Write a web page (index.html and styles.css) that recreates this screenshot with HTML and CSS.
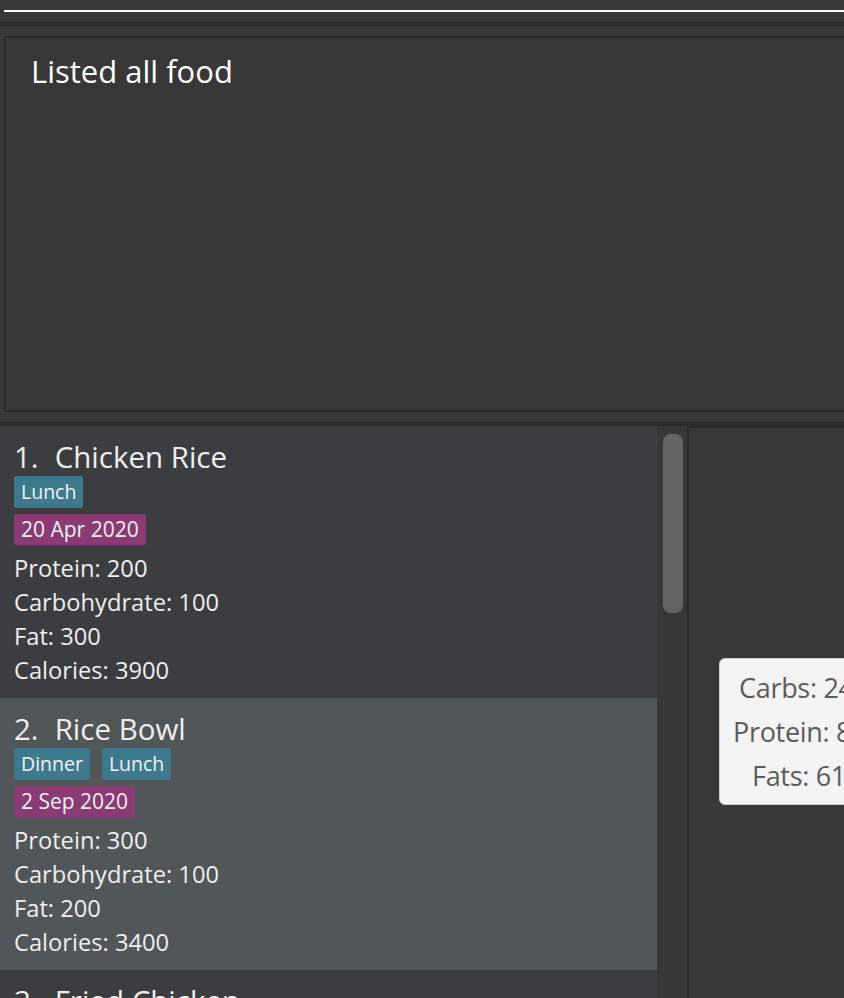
FILE: index.html
```html
<!DOCTYPE html>
<html>
<head>
<meta charset="utf-8">
<link rel="stylesheet" href="styles.css">
</head>
<body>
<div class="app">
  <div class="command"><div class="command-line"></div></div>
  <div class="sep"></div>
  <div class="result-wrap">
    <div class="result">Listed all food</div>
  </div>
  <div class="sep"></div>
  <div class="main">
    <div class="list">
      <div class="card">
        <div class="title"><span class="idx">1.</span>Chicken Rice</div>
        <div class="tags"><span class="tag">Lunch</span></div>
        <div class="tags"><span class="date">20 Apr 2020</span></div>
        <div class="line">Protein: 200</div>
        <div class="line">Carbohydrate: 100</div>
        <div class="line">Fat: 300</div>
        <div class="line">Calories: 3900</div>
      </div>
      <div class="card selected">
        <div class="title"><span class="idx">2.</span>Rice Bowl</div>
        <div class="tags"><span class="tag">Dinner</span><span class="tag">Lunch</span></div>
        <div class="tags"><span class="date">2 Sep 2020</span></div>
        <div class="line">Protein: 300</div>
        <div class="line">Carbohydrate: 100</div>
        <div class="line">Fat: 200</div>
        <div class="line">Calories: 3400</div>
      </div>
      <div class="card">
        <div class="title"><span class="idx">3.</span>Fried Chicken</div>
      </div>
    </div>
    <div class="scroll"><div class="thumb"></div></div>
    <div class="divider"></div>
    <div class="chart">
      <div class="legend">
        <div class="legend-line carbs">Carbs: 24%</div>
        <div class="legend-line protein">Protein: 8%</div>
        <div class="legend-line fats">Fats: 61%</div>
      </div>
    </div>
  </div>
</div>
</body>
</html>
```
FILE: styles.css
```css
html, body {
  margin: 0;
  padding: 0;
  background: #383838;
  overflow: hidden;
}
.app {
  width: 844px;
  height: 998px;
  overflow: hidden;
  font-family: "Open Sans", "Noto Sans", sans-serif;
  display: flex;
  flex-direction: column;
}
.command {
  height: 22px;
  padding: 10px 0 0 4px;
  box-sizing: border-box;
  flex: none;
}
.command-line {
  height: 2px;
  background: #ffffff;
}
.sep {
  height: 4px;
  background: #2b2b2b;
  flex: none;
}
.result-wrap {
  padding: 10px 0 10px 4px;
  flex: none;
}
.result {
  height: 359px;
  border: 2px solid #2a2a2a;
  border-right: none;
  color: #ffffff;
  font-size: 31px;
  padding: 13px 0 0 25px;
  line-height: 40px;
}
.main {
  flex: 1;
  display: flex;
  min-height: 0;
}
.list {
  width: 657px;
  flex: none;
  overflow: hidden;
}
.card {
  height: 272px;
  box-sizing: border-box;
  background: #3c3d40;
  padding: 10px 14px 0 14px;
  color: #f0f0f0;
}
.card.selected {
  background: #515658;
}
.title {
  font-size: 29.5px;
  line-height: 42px;
  height: 40px;
  color: #eeeeee;
  white-space: nowrap;
}
.idx {
  display: inline-block;
  margin-right: 16px;
}
.tags {
  display: flex;
  gap: 12px;
  margin-bottom: 6px;
}
.tag, .date {
  display: inline-block;
  line-height: 32px;
  height: 32px;
  padding: 0 7px;
  border-radius: 3px;
  color: #f2f2f2;
}
.tag {
  background: #3d7a8e;
  font-size: 19.5px;
}
.date {
  background: #8a3b74;
  font-size: 21px;
  height: 31px;
  line-height: 31px;
}
.line {
  font-size: 23.7px;
  line-height: 34px;
  color: #eeeeee;
  white-space: nowrap;
}
.scroll {
  width: 30px;
  flex: none;
  background: #373737;
  padding: 8px 0 0 6px;
  box-sizing: border-box;
}
.thumb {
  width: 20px;
  height: 179px;
  border-radius: 8px;
  background: #646464;
}
.divider {
  width: 2px;
  flex: none;
  background: #2a2a2a;
}
.chart {
  flex: 1;
  background: #383838;
  border-top: 2px solid #2b2b2b;
  padding: 230px 0 0 30px;
  overflow: hidden;
}
.legend {
  width: 200px;
  height: 147px;
  background: #f4f4f4;
  border: 1px solid #cfcfcf;
  border-radius: 6px;
  padding: 7px 0 0 0;
  box-sizing: border-box;
  color: #5b5b5b;
  font-size: 27px;
  letter-spacing: -0.3px;
}
.legend-line {
  line-height: 44px;
  white-space: nowrap;
}
.carbs { padding-left: 19px; }
.protein { padding-left: 13px; }
.fats { padding-left: 32px; }
```
